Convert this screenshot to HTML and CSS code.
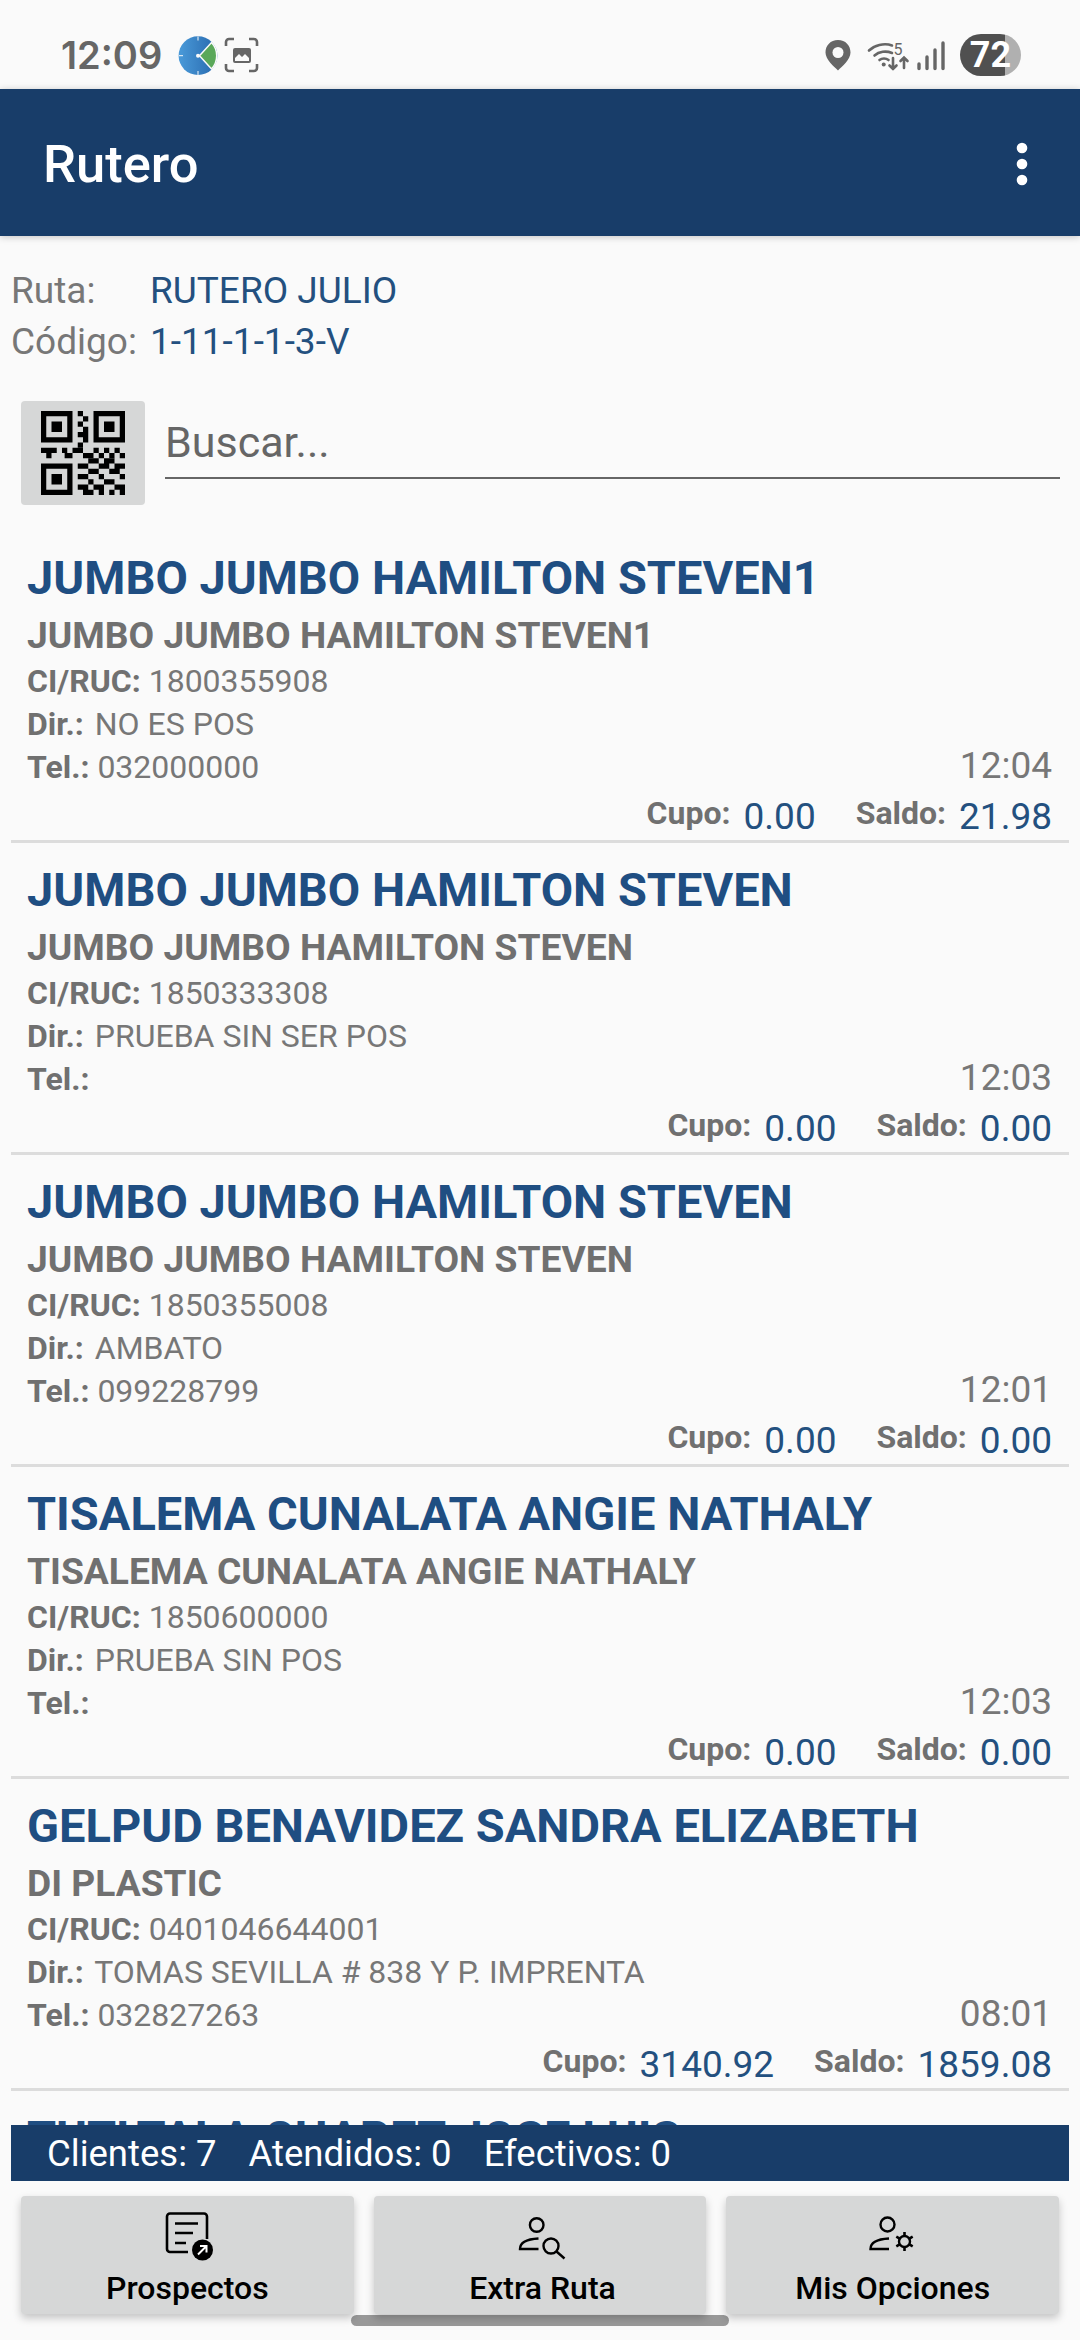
FILE: index.html
```html
<!DOCTYPE html>
<html lang="es">
<head>
  <meta charset="UTF-8">
  <title>Rutero</title>
  <link rel="stylesheet" href="styles.css">
</head>
<body>
<div class="app">

  <div class="status">
    <div class="status-left">
      <span class="clock">12:09</span>
      <svg class="st-pie" width="40" height="50" viewBox="0 0 40 50">
        <defs>
          <linearGradient id="pieBlue" x1="0" x2="1" y1="0" y2="0">
            <stop offset="0" stop-color="#4a9ad9"/>
            <stop offset="1" stop-color="#2768ad"/>
          </linearGradient>
        </defs>
        <circle cx="20" cy="25.7" r="19.4" fill="url(#pieBlue)"/>
        <path d="M21.5 25.7L33.5 12.5A19.4 19.4 0 0 1 33.5 39Z" fill="#5aa85a" stroke="#fafafa" stroke-width="1.5"/>
        <path d="M20 6.5v4M20 41v4.5M1 25.7h4" stroke="#fafafa" stroke-width="1"/>
        <circle cx="20" cy="25.7" r="2" fill="#fafafa"/>
      </svg>
      <svg class="st-shot" width="40" height="50" viewBox="0 0 40 50">
        <path d="M4 16v-4a3 3 0 0 1 3-3h5M27 9h5a3 3 0 0 1 3 3v4M35 34v4a3 3 0 0 1-3 3h-5M12 41H7a3 3 0 0 1-3-3v-4" fill="none" stroke="#666" stroke-width="2.6"/>
        <rect x="11" y="18" width="18" height="15" rx="2" fill="#666"/>
        <path d="M13 31v-3l4-4 3 3 3-3 4 4v3z" fill="#fafafa"/>
      </svg>
    </div>
    <div class="status-right">
      <svg width="38" height="50" viewBox="0 0 38 50">
        <path d="M15 10C7.500 10 2.500 15.500 2.500 22.500C2.500 29.500 11 36.500 15 40.500C19 36.500 27.500 29.500 27.500 22.500C27.500 15.500 22.500 10 15 10Z" fill="#666"/>
        <circle cx="15" cy="22.500" r="5.500" fill="#fafafa"/>
      </svg>
      <svg width="46" height="50" viewBox="0 0 46 50">
        <g fill="none" stroke="#666" stroke-width="2.600" stroke-linecap="round">
          <path d="M4 20.500C9 15.500 19 12.500 27 15.500"/>
          <path d="M9.500 25.500C14 21.500 21 20.500 27 23"/>
          <path d="M14.500 30C17 28 21 28 23.500 30"/>
          <path d="M28 28v11M24.500 35.500l3.500 3.500 3.500-3.500"/>
          <path d="M39 38V27.500M35.500 31l3.500-3.500 3.500 3.500"/>
        </g>
        <circle cx="18.700" cy="34.500" r="2" fill="#666"/>
        <text x="28.500" y="25" class="st-five">5</text>
      </svg>
      <svg width="41" height="50" viewBox="0 0 41 50">
        <g stroke="#666" stroke-width="3.400" stroke-linecap="round">
          <path d="M4 34v4.500M12 27v11.500M20 20v18.500M28 13v25.500"/>
        </g>
      </svg>
      <div class="battery"><span class="battery-num">72</span></div>
    </div>
  </div>

  <div class="toolbar">
    <span class="toolbar-title">Rutero</span>
    <svg width="12" height="44" viewBox="0 0 12 44">
      <circle cx="6" cy="6" r="5.300" fill="#fff"/>
      <circle cx="6" cy="22" r="5.300" fill="#fff"/>
      <circle cx="6" cy="38" r="5.300" fill="#fff"/>
    </svg>
  </div>

  <div class="route-info">
    <div class="route-line"><span class="route-label">Ruta:</span><span class="route-value">RUTERO JULIO</span></div>
    <div class="route-line"><span class="route-label">Código:</span><span class="route-value">1-11-1-1-3-V</span></div>
  </div>

  <div class="search-row">
    <div class="qr-btn">
      <svg width="84" height="84" viewBox="0 0 16 16" fill="#000">
        <path fill-rule="evenodd" d="M0 0h6v6H0zM1 1v4h4V1zM10 0h6v6h-6zM11 1v4h4V1zM0 10h6v6H0zM1 11v4h4v-4z"/>
        <path d="M2 2h2v2H2zM12 2h2v2h-2zM2 12h2v2H2z"/>
        <path d="M7 0h1v1H7zM8 1h1v1H8zM7 2h1v1H7zM8 3h1v1H8zM7 4h2v1H7zM8 5h1v1H8zM7 6h1v1H7z"/>
        <path d="M0 7h3v1H0zM4 7h1v1H4zM6 7h2v1H6zM10 7h1v1h-1zM12 7h1v1h-1zM14 7h1v1h-1z"/>
        <path d="M1 8h1v1H1zM4.500 8h1.500v1H4.500zM8 8h2v1H8zM11 8h1v1h-1zM13 8h1v1h-1zM15 8h1v1h-1z"/>
        <path d="M9 9h2v1H9zM12 9h2v1h-2zM7 10h2v1H7zM11 10h2v1h-2zM14 10h2v1h-2zM9 11h2v1H9zM13 11h2v1h-2zM7 12h2v1H7zM11 12h1v1h-1zM15 12h1v1h-1zM9 13h1v1H9zM12 13h2v1h-2zM7 14h2v1H7zM10 14h2v1h-2zM14 14h2v1h-2zM8 15h2v1H8zM11 15h1v1h-1zM13 15h1v1h-1zM15 15h1v1h-1z"/>
      </svg>
    </div>
    <div class="search-box">Buscar...</div>
  </div>

  <div class="list">
    <div class="row">
      <div class="row-title">JUMBO JUMBO HAMILTON STEVEN1</div>
      <div class="row-sub">JUMBO JUMBO HAMILTON STEVEN1</div>
      <div class="row-line"><b>CI/RUC:</b> 1800355908</div>
      <div class="row-line row-dir"><b>Dir.:</b> NO ES POS</div>
      <div class="row-line row-tel"><span><b>Tel.:</b> 032000000</span><span class="row-time">12:04</span></div>
      <div class="row-foot">
        <span class="foot-label">Cupo:</span><span class="foot-value">0.00</span>
        <span class="foot-label foot-gap">Saldo:</span><span class="foot-value">21.98</span>
      </div>
    </div>
    <div class="row">
      <div class="row-title">JUMBO JUMBO HAMILTON STEVEN</div>
      <div class="row-sub">JUMBO JUMBO HAMILTON STEVEN</div>
      <div class="row-line"><b>CI/RUC:</b> 1850333308</div>
      <div class="row-line row-dir"><b>Dir.:</b> PRUEBA SIN SER POS</div>
      <div class="row-line row-tel"><span><b>Tel.:</b></span><span class="row-time">12:03</span></div>
      <div class="row-foot">
        <span class="foot-label">Cupo:</span><span class="foot-value">0.00</span>
        <span class="foot-label foot-gap">Saldo:</span><span class="foot-value">0.00</span>
      </div>
    </div>
    <div class="row">
      <div class="row-title">JUMBO JUMBO HAMILTON STEVEN</div>
      <div class="row-sub">JUMBO JUMBO HAMILTON STEVEN</div>
      <div class="row-line"><b>CI/RUC:</b> 1850355008</div>
      <div class="row-line row-dir"><b>Dir.:</b> AMBATO</div>
      <div class="row-line row-tel"><span><b>Tel.:</b> 099228799</span><span class="row-time">12:01</span></div>
      <div class="row-foot">
        <span class="foot-label">Cupo:</span><span class="foot-value">0.00</span>
        <span class="foot-label foot-gap">Saldo:</span><span class="foot-value">0.00</span>
      </div>
    </div>
    <div class="row">
      <div class="row-title">TISALEMA CUNALATA ANGIE NATHALY</div>
      <div class="row-sub">TISALEMA CUNALATA ANGIE NATHALY</div>
      <div class="row-line"><b>CI/RUC:</b> 1850600000</div>
      <div class="row-line row-dir"><b>Dir.:</b> PRUEBA SIN POS</div>
      <div class="row-line row-tel"><span><b>Tel.:</b></span><span class="row-time">12:03</span></div>
      <div class="row-foot">
        <span class="foot-label">Cupo:</span><span class="foot-value">0.00</span>
        <span class="foot-label foot-gap">Saldo:</span><span class="foot-value">0.00</span>
      </div>
    </div>
    <div class="row">
      <div class="row-title">GELPUD BENAVIDEZ SANDRA ELIZABETH</div>
      <div class="row-sub">DI PLASTIC</div>
      <div class="row-line"><b>CI/RUC:</b> 0401046644001</div>
      <div class="row-line row-dir"><b>Dir.:</b> TOMAS SEVILLA # 838 Y P. IMPRENTA</div>
      <div class="row-line row-tel"><span><b>Tel.:</b> 032827263</span><span class="row-time">08:01</span></div>
      <div class="row-foot">
        <span class="foot-label">Cupo:</span><span class="foot-value">3140.92</span>
        <span class="foot-label foot-gap">Saldo:</span><span class="foot-value">1859.08</span>
      </div>
    </div>
    <div class="row">
      <div class="row-title">TUTLTALA CHAPET JOSE LUIS</div>
    </div>
  </div>

  <div class="totals">
    <span>Clientes: 7</span>
    <span>Atendidos: 0</span>
    <span>Efectivos: 0</span>
  </div>

  <div class="actions">
    <div class="action">
      <svg width="80" height="60" viewBox="-3 0 80 60">
        <path d="M38 47H20a3 3 0 0 1-3-3V11.500a3 3 0 0 1 3-3h34a3 3 0 0 1 3 3V34" fill="none" stroke="#000" stroke-width="2.600"/>
        <path d="M25 18.500h23M25 28h18M25 38h11" stroke="#000" stroke-width="2.600"/>
        <circle cx="52.500" cy="45" r="10.500" fill="#000"/>
        <path d="M48 49.500l8.500-8.500M50 41h6.500v6.500" fill="none" stroke="#fff" stroke-width="2"/>
      </svg>
      <span>Prospectos</span>
    </div>
    <div class="action action-mid">
      <svg width="80" height="60" viewBox="-5 0 80 60">
        <circle cx="31.700" cy="20" r="6.800" fill="none" stroke="#000" stroke-width="2.400"/>
        <path d="M33.500 33.500C24 34 15 36.500 15 44H33.500" fill="none" stroke="#000" stroke-width="2.400"/>
        <circle cx="46" cy="41" r="7.500" fill="none" stroke="#000" stroke-width="2.400"/>
        <path d="M51.500 46.500L59.500 53.500" stroke="#000" stroke-width="2.400"/>
      </svg>
      <span>Extra Ruta</span>
    </div>
    <div class="action">
      <svg width="80" height="60" viewBox="2.500 0 80 60">
        <circle cx="37" cy="19.500" r="7" fill="none" stroke="#000" stroke-width="2.400"/>
        <path d="M38.500 33.500C29 34 20 36.500 20 44H38.500" fill="none" stroke="#000" stroke-width="2.400"/>
        <circle cx="54" cy="36.500" r="5.500" fill="none" stroke="#000" stroke-width="2.400"/>
        <path d="M54 27v4M54 42v4M45.800 31.700l3.400 2M58.800 39.300l3.400 2M45.800 41.300l3.400-2M58.800 33.700l3.400-2" stroke="#000" stroke-width="2.600"/>
      </svg>
      <span>Mis Opciones</span>
    </div>
  </div>

  <div class="home-bar"></div>
</div>
</body>
</html>
```

FILE: styles.css
```css
* {
  box-sizing: border-box;
}
body {
  margin: 0;
  background-color: #fafafa;
  font-family: Roboto, "Liberation Sans", sans-serif;
}
.app {
  position: relative;
  width: 1080px;
  height: 2340px;
  display: flex;
  flex-direction: column;
  overflow: hidden;
}

/* status bar */
.status {
  height: 89px;
  flex-shrink: 0;
  padding: 30px 59px 9px 61px;
  display: flex;
  justify-content: space-between;
  align-items: center;
}
.status-left, .status-right {
  display: flex;
  align-items: center;
  gap: 4px;
}
.clock {
  font-family: Inter, Roboto, sans-serif;
  font-size: 38px;
  font-weight: 600;
  color: #666;
  margin-right: 12px;
}
.st-five {
  font-family: Roboto, sans-serif;
  font-size: 16px;
  fill: #666;
}
.battery {
  width: 61px;
  height: 42px;
  border-radius: 21px;
  background: linear-gradient(90deg, #505050 0, #505050 45px, #b0b0b0 45px);
  display: flex;
  align-items: center;
  justify-content: center;
}
.battery-num {
  color: #fff;
  font-size: 36px;
  font-weight: 700;
}

/* toolbar */
.toolbar {
  height: 147px;
  flex-shrink: 0;
  background-color: #183d69;
  box-shadow: 0 1px 7px rgba(0,0,0,0.22);
  padding: 3px 52px 0 43px;
  display: flex;
  justify-content: space-between;
  align-items: center;
  z-index: 1;
}
.toolbar-title {
  color: #fff;
  font-size: 52.5px;
  font-weight: 500;
}

/* route + search */
.route-info {
  padding: 29px 0 0 11px;
}
.route-line {
  display: flex;
  font-size: 37px;
  line-height: 51px;
}
.route-label {
  width: 139px;
  color: #777;
}
.route-value {
  color: #23507f;
}
.search-row {
  margin-top: 34px;
  padding: 0 20px 0 21px;
  display: flex;
  gap: 20px;
}
.qr-btn {
  width: 124px;
  height: 104px;
  background-color: #d6d7d7;
  border-radius: 4px;
  padding-top: 10px;
  display: flex;
  justify-content: center;
  align-items: flex-start;
}
.search-box {
  flex: 1;
  height: 78px;
  border-bottom: 2px solid #666;
  font-size: 43px;
  line-height: 83px;
  color: #666;
}

/* client list */
.list {
  flex: 1;
  margin-top: 26px;
  padding: 0 11px;
  overflow: hidden;
}
.row {
  height: 312px;
  padding: 21px 17px 3px 16px;
  border-bottom: 3px solid #dcdcdc;
}
.row-title {
  font-size: 47px;
  font-weight: 700;
  line-height: 52px;
  color: #1f4e82;
}
.row-sub {
  margin-top: 6px;
  font-size: 37.2px;
  font-weight: 700;
  line-height: 50px;
  color: #707070;
}
.row-line {
  font-size: 32px;
  line-height: 43.2px;
  color: #777;
}
.row-line b {
  color: #707070;
}
.row-dir b {
  margin-right: 3px;
}
.row-tel {
  display: flex;
  justify-content: space-between;
}
.row-time {
  font-size: 37px;
  line-height: 40px;
  color: #777;
}
.row-foot {
  height: 44px;
  margin-top: 3.5px;
  display: flex;
  justify-content: flex-end;
  align-items: flex-start;
}
.foot-label {
  font-size: 32px;
  font-weight: 700;
  line-height: 40px;
  color: #707070;
  margin-right: 13px;
}
.foot-gap {
  margin-left: 40px;
}
.foot-value {
  margin-top: 4px;
  font-size: 37px;
  line-height: 40px;
  color: #23507f;
}

/* bottom */
.totals {
  height: 56px;
  flex-shrink: 0;
  margin: 0 11px;
  padding-left: 36px;
  background-color: #183d69;
  display: flex;
  align-items: center;
  gap: 32px;
  font-size: 36.5px;
  color: #fff;
}
.actions {
  flex-shrink: 0;
  margin-top: 15px;
  padding: 0 21px 26px;
  display: grid;
  grid-template-columns: repeat(3, 1fr);
  gap: 20px;
  z-index: 1;
}
.action {
  height: 118px;
  background-color: #d6d7d7;
  border-radius: 4px;
  box-shadow: 0 4px 8px rgba(0,0,0,0.22);
  display: flex;
  flex-direction: column;
  align-items: center;
  padding-top: 9px;
  font-size: 32px;
  font-weight: 500;
  color: #000;
}
.action span {
  line-height: 40px;
  margin-top: 3px;
}
.action-mid span {
  margin-left: 5px;
}
.home-bar {
  position: absolute;
  left: 351px;
  top: 2315px;
  width: 378px;
  height: 11px;
  border-radius: 6px;
  background-color: #999;
}
```
